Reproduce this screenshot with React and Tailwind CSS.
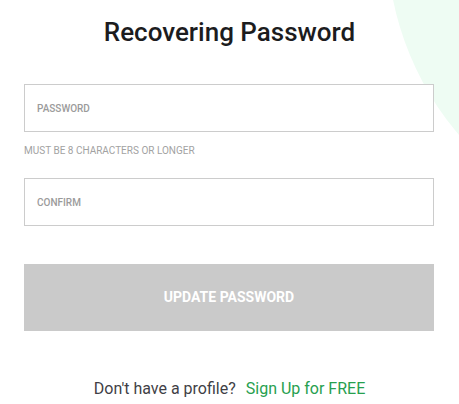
import React, { useState } from 'react';

const App = () => {
  const [formData, setFormData] = useState({ password: '', confirm: '' });

  const handleChange = (e) => {
    setFormData({ ...formData, [e.target.name]: e.target.value });
  };

  return (
    <div className="relative w-full h-[404px] overflow-hidden bg-white font-['Roboto',sans-serif]">
      {/* decorative circle, top right */}
      <div className="absolute left-[387px] top-[-360px] w-[600px] h-[600px] rounded-full bg-[#eefcf3]" />

      <div className="relative px-6 pt-4">
        <h1 className="text-center text-[26px] leading-8 font-medium text-[#1c1c1e]">
          Recovering Password
        </h1>

        <form onSubmit={(e) => e.preventDefault()} className="mt-9 flex flex-col">
          <input
            type="password"
            name="password"
            value={formData.password}
            onChange={handleChange}
            placeholder="PASSWORD"
            className="w-[410px] h-12 px-3 border border-[#cccccc] bg-white text-[10px] font-medium outline-none placeholder:text-[#9b9b9b]"
          />
          <p className="mt-3 text-[10px] leading-[14px] text-[#a2a2a2]">
            MUST BE 8 CHARACTERS OR LONGER
          </p>
          <input
            type="password"
            name="confirm"
            value={formData.confirm}
            onChange={handleChange}
            placeholder="CONFIRM"
            className="mt-5 w-[410px] h-12 px-3 border border-[#cccccc] bg-white text-[10px] font-medium outline-none placeholder:text-[#9b9b9b]"
          />
          <button
            type="submit"
            disabled
            className="mt-[38px] w-[410px] h-[67px] bg-[#cacaca] text-white text-[14px] font-bold"
          >
            UPDATE PASSWORD
          </button>
        </form>

        <p className="mt-12 text-center text-[16px] leading-5 text-[#3f3f46]">
          Don't have a profile?
          <a href="#" className="ml-[10px] text-[#27a04f]">Sign Up for FREE</a>
        </p>
      </div>
    </div>
  );
};

export default App;
